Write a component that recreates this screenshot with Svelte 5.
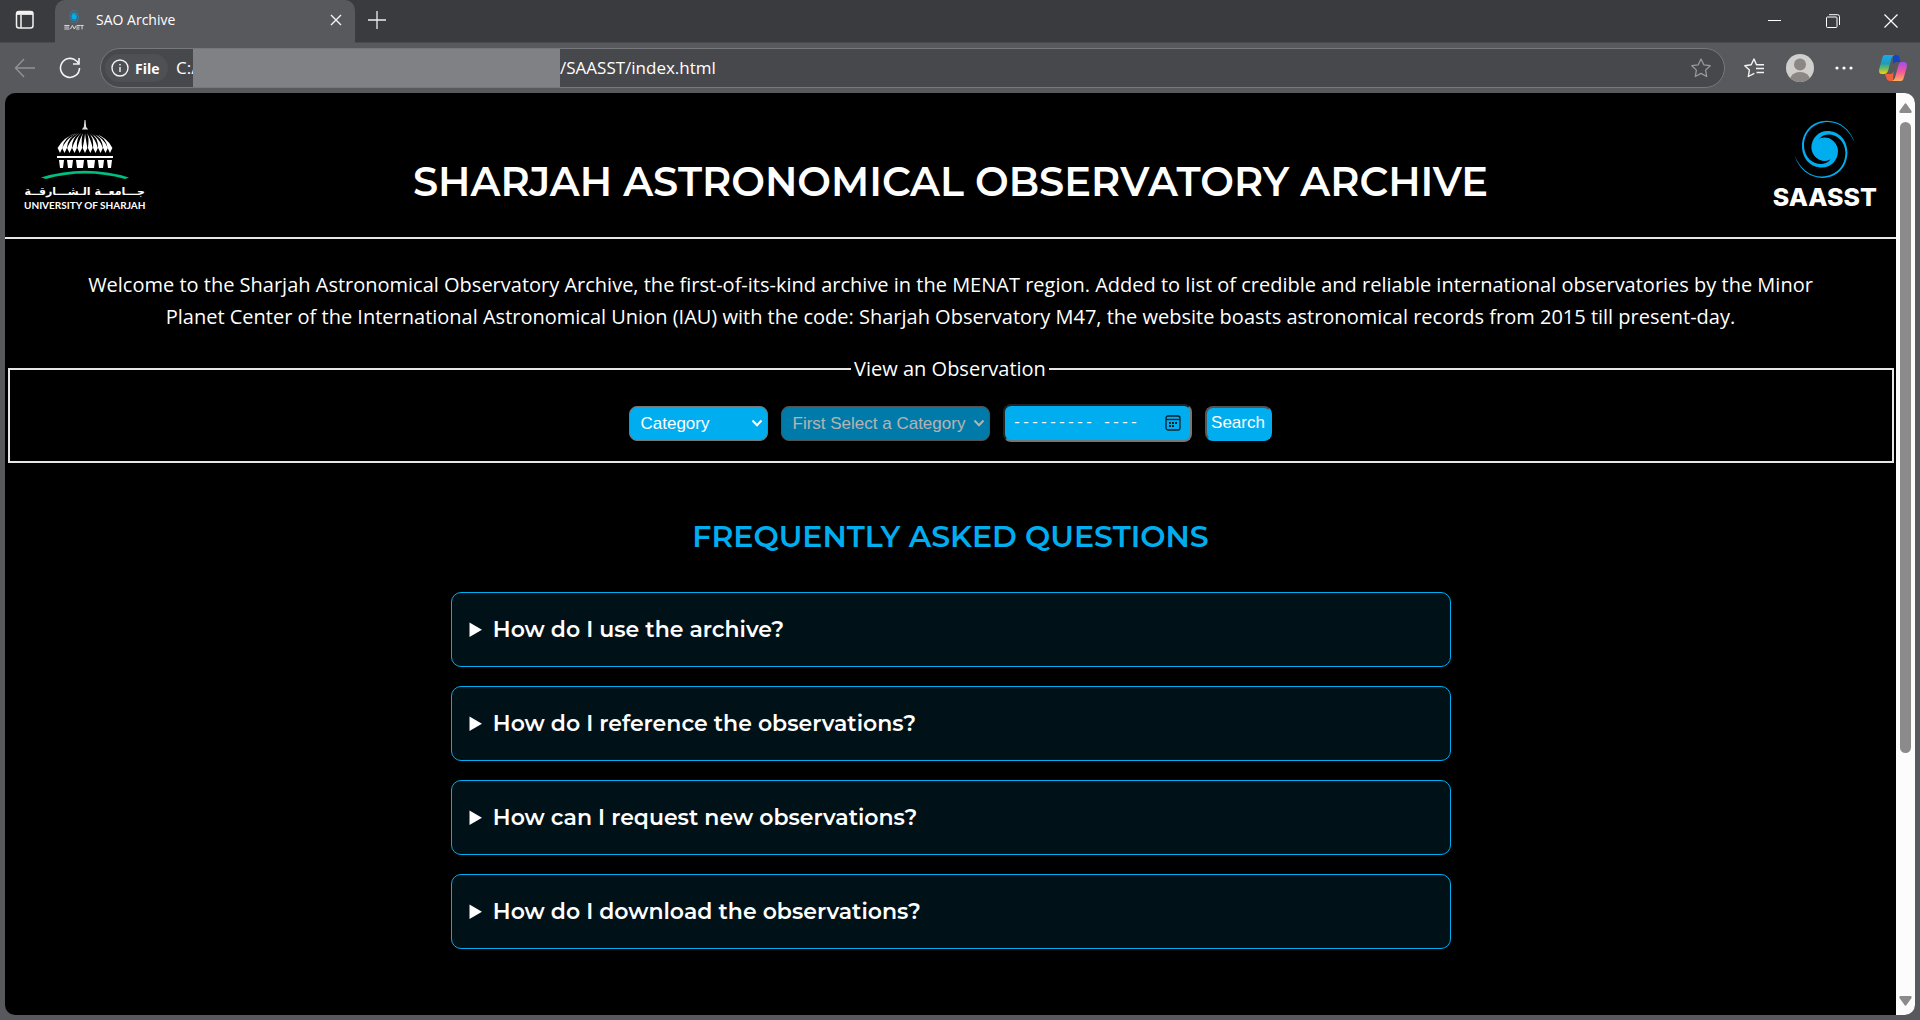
<script>
  const questions = [
    { q: 'How do I use the archive?', a: 'Choose a category, pick an object and a month, then press Search.' },
    { q: 'How do I reference the observations?', a: 'Cite the Sharjah Astronomical Observatory (M47) and the observation date.' },
    { q: 'How can I request new observations?', a: 'Contact the observatory team with your target and preferred dates.' },
    { q: 'How do I download the observations?', a: 'Open an observation and use its download link.' }
  ];
  const petals = [-25, -20.5, -15.5, -10.5, -5.3, 0, 5.3, 10.5, 15.5, 20.5, 25];
  const arm = 'M61 23C56 9 46 .7 32.700 .7C18 .7 8 12 8 26C8 39 17 47.500 28 47.500C37 47.500 44 40 44 31C44 24 38 18 31 18L38.700 35C37 40 33 44 27 44C18 44 10.500 37 10 26C10 13 19 2.500 33 2C46 1.700 55 10 61 23Z';
</script>

{#snippet galaxy()}
  <g fill="#00aeef">
    <circle cx="30.700" cy="29.300" r="11.700" />
    <path d={arm} />
    <path d={arm} transform="rotate(180 30.700 29.300)" />
  </g>
{/snippet}

<svelte:head><title>SAO Archive</title></svelte:head>

<div class="window">
  <div class="tabstrip">
    <button class="bare workspace" aria-label="Tab actions">
      <svg width="20" height="20" viewBox="0 0 20 20" fill="none" stroke="#f2f2f2" stroke-width="1.500">
        <rect x="1.500" y="1.500" width="16.500" height="16.500" rx="2.500" />
        <path d="M2 4h16M6 5v13" /><path d="M2 3h16" stroke-width="3" />
      </svg>
    </button>
    <div class="tab">
      <svg class="favicon" width="20" height="20" viewBox="0 0 62 62">
        <g transform="translate(13 0) scale(.6 .7)">{@render galaxy()}</g>
        <path d="M1 48h16M1 53h15M1 59h16M20 59l6-11 6 11 6-11M40 48h10M38 53h10M38 59h10M50 48h11M56 48v12" fill="none" stroke="#ddd" stroke-width="3" />
      </svg>
      <span class="tab-title">SAO Archive</span>
      <button class="bare tab-close" aria-label="Close tab">
        <svg width="12" height="12" viewBox="0 0 12 12" stroke="#f4f4f4" stroke-width="1.400"><path d="M1 1l10 10M11 1L1 11" /></svg>
      </button>
    </div>
    <button class="bare new-tab" aria-label="New tab">
      <svg width="18" height="18" viewBox="0 0 18 18" stroke="#eee" stroke-width="1.300"><path d="M9 0v18M0 9h18" /></svg>
    </button>
    <div class="controls">
      <button class="bare" aria-label="Minimise"><svg width="14" height="14" viewBox="0 0 14 14" stroke="#fff"><path d="M0 6.500h13" /></svg></button>
      <button class="bare" aria-label="Restore"><svg width="14" height="14" viewBox="0 0 14 14" fill="none" stroke="#fff"><rect x=".5" y="3" width="10.500" height="10.500" rx="1" /><path d="M3 .7h8.500a2 2 0 0 1 2 2V11" /></svg></button>
      <button class="bare" aria-label="Close window"><svg width="14" height="14" viewBox="0 0 14 14" stroke="#fff" stroke-width="1.200"><path d="M.5.5l13 13M13.500.5l-13 13" /></svg></button>
    </div>
  </div>

  <div class="toolbar">
    <button class="bare" aria-label="Back">
      <svg width="22" height="20" viewBox="0 0 22 20" fill="none" stroke="#919296" stroke-width="1.400"><path d="M21 10H1.500M10 1L1.500 10l8.500 9" /></svg>
    </button>
    <button class="bare" aria-label="Refresh">
      <svg width="22" height="22" viewBox="0 0 22 22" fill="none" stroke="#f4f4f4" stroke-width="1.600"><path d="M20.500 11a9.500 9.500 0 1 1-3-7l2.500 2.500M20 1v6h-6" /></svg>
    </button>
    <div class="address">
      <button class="site">
        <svg width="18" height="18" viewBox="0 0 18 18" fill="none" stroke="#f4f4f4" stroke-width="1.400"><circle cx="9" cy="9" r="8" /><path d="M9 8v5" /><path d="M9 5v1.500" /></svg>
        File
      </button>
      <span class="drive">C:/</span>
      <span class="hidden-path"></span>
      <span class="path">/SAASST/index.html</span>
      <button class="bare star" aria-label="Add to favourites">
        <svg width="20" height="20" viewBox="0 0 20 20" fill="none" stroke="#98999c" stroke-width="1.300" stroke-linejoin="round"><path d="M10 1l2.800 5.800 6.400.9-4.600 4.400 1.100 6.400L10 15.400l-5.700 3.100 1.100-6.400L.8 7.700l6.400-.9z" /></svg>
      </button>
    </div>
    <div class="actions">
      <button class="bare" aria-label="Favourites">
        <svg width="21" height="20" viewBox="0 0 21 20" fill="none" stroke="#f4f4f4" stroke-width="1.400" stroke-linejoin="round"><path d="M20 6.700h-7.500L10 1 7.200 6.800.8 7.700l4.600 4.400-1.100 6.400 6-3.200M12 10.500h8M12.500 14.500h7.500" /></svg>
      </button>
      <button class="bare" aria-label="Profile">
        <svg width="28" height="28" viewBox="0 0 28 28"><clipPath id="face"><circle cx="14" cy="14" r="14" /></clipPath><g clip-path="url(#face)"><path d="M0 0h28v28H0z" fill="#d1cfcd" /><circle cx="14" cy="10.500" r="6" fill="#8b8784" /><ellipse cx="14" cy="26" rx="10" ry="8" fill="#8b8784" /></g></svg>
      </button>
      <button class="bare" aria-label="Settings and more">
        <svg width="18" height="4" viewBox="0 0 18 4" fill="#fff"><circle cx="2" cy="2" r="1.600" /><circle cx="9" cy="2" r="1.600" /><circle cx="16" cy="2" r="1.600" /></svg>
      </button>
      <button class="bare copilot" aria-label="Copilot">
        <svg width="28" height="26" viewBox="0 0 28 26">
          <defs>
            <linearGradient id="cl" x1="0" y1="0" x2="0" y2="1"><stop offset="0" stop-color="#1aa8f0" /><stop offset=".45" stop-color="#1f9cb8" /><stop offset=".75" stop-color="#7cbf55" /><stop offset="1" stop-color="#ffd400" /></linearGradient>
            <linearGradient id="cr" x1="0" y1="0" x2="0" y2="1"><stop offset="0" stop-color="#a54cf0" /><stop offset=".5" stop-color="#f0589a" /><stop offset="1" stop-color="#ffac5c" /></linearGradient>
          </defs>
          <path d="M14 0h3c2 0 3 1 3.500 3l1 4h-4c-2 0-3 1-3.500 3z" fill="#1443c8" />
          <path d="M14 26h-3c-2 0-3-1-3.500-3l-1.500-4h5c2 0 3-1 3.500-3z" fill="#f0603c" />
          <path d="M6 0h9.500c-2.500 1-3 3-4 7L9 16c-.8 2-2 3-4 3H3c-3 0-3.500-3-2.500-6L3 4c.6-2.500 1.500-4 3-4z" fill="url(#cl)" />
          <path d="M22 26h-9c2.500-1 3-3 4-7l2.500-9c.6-2 1.600-3 3.500-3h2c3 0 3.500 3 2.500 6L25 22c-.6 2.500-1.500 4-3 4z" fill="url(#cr)" />
        </svg>
      </button>
    </div>
  </div>

  <div class="viewport">
    <main>
      <header>
        <div class="logo university">
          <svg width="88" height="60" viewBox="0 0 88 60">
            <path d="M43.500 0h1l.7 7 2 2.500h-6.400l2-2.500z" fill="#ddd" />
            <g fill="#fff">
              {#each petals as p}
                <path d="M{44 + p * 0.35} 13Q{44 + p * 0.85} 17 {44 + p - 2.4} 28L{44 + p} 33L{44 + p + 2.4} 28Q{44 + p * 0.9 + 0.6} 18 {44 + p * 0.35} 13Z" />
              {/each}
              <path d="M16 36h56v2H16zM18 40h5l-1 8h-3zM26 40h6l-1 8h-4zM35 40h8l-1 8h-6zM46 40h8l-1 8h-6zM57 40h6l-1 8h-4zM66 40h5l-1 8h-3z" />
            </g>
            <path d="M0 57.500Q44 44 88 57.500l-4 1.500Q44 48 5 59z" fill="#00bf83" />
          </svg>
          <span class="arabic" lang="ar" dir="rtl">جـــامعــة الـشـــارقــة</span>
          <span class="english">UNIVERSITY OF SHARJAH</span>
        </div>
        <h1>SHARJAH ASTRONOMICAL OBSERVATORY ARCHIVE</h1>
        <div class="logo saasst">
          <svg width="62" height="58" viewBox="0 0 62 58">{@render galaxy()}</svg>
          <span class="wordmark">SAASST</span>
        </div>
      </header>

      <p class="intro">Welcome to the Sharjah Astronomical Observatory Archive, the first-of-its-kind archive in the MENAT region. Added to list of credible and reliable international observatories by the Minor Planet Center of the International Astronomical Union (IAU) with the code: Sharjah Observatory M47, the website boasts astronomical records from 2015 till present-day.</p>

      <form onsubmit={(e) => e.preventDefault()}>
        <fieldset>
          <legend>View an Observation</legend>
          <div class="fields">
            <select class="category" aria-label="Category"><option>Category</option><option>Moon</option><option>Sun</option></select>
            <select class="object" aria-label="Object" disabled><option>First Select a Category</option></select>
            <div class="month">
              <input type="text" aria-label="Month and year" placeholder="--------- ----" />
              <button type="button" class="bare" aria-label="Open calendar">
                <svg width="16" height="16" viewBox="0 0 16 16" fill="none" stroke="#06202b" stroke-width="1.300">
                  <rect x="1" y="1" width="14" height="14" rx="2" /><path d="M1 4.500h14" />
                  <path d="M4 8h2M7 8h2M10 8h2M4 11h2M7 11h2" stroke-width="2" />
                </svg>
              </button>
            </div>
            <button class="search">Search</button>
          </div>
        </fieldset>
      </form>

      <section class="faq">
        <h2>FREQUENTLY ASKED QUESTIONS</h2>
        {#each questions as item}
          <details><summary>{item.q}</summary><p>{item.a}</p></details>
        {/each}
      </section>
    </main>
    <div class="scrollbar">
      <svg width="13" height="10" viewBox="0 0 13 10" fill="#8b8b8b"><path d="M5.500 1Q6.500-.5 7.500 1L12.500 8Q13 10 11.500 10H1.500Q0 10 .5 8Z" /></svg>
      <div class="track"><div class="thumb"></div></div>
      <svg width="13" height="10" viewBox="0 0 13 10" fill="#8b8b8b"><path d="M5.500 9Q6.500 10.500 7.500 9L12.500 2Q13 0 11.500 0H1.500Q0 0 .5 2Z" /></svg>
    </div>
  </div>
</div>

<style>
  :global(body) { margin: 0; background: #58595d; }
  * { box-sizing: border-box; }
  svg { display: block; flex: none; }
  .window { min-height: 100vh; display: flex; flex-direction: column; background: #58595d; color: #fff; font-family: "Segoe UI", "Open Sans", sans-serif; }
  .bare { border: 0; padding: 0; background: none; display: flex; align-items: center; justify-content: center; }

  .tabstrip { display: flex; height: 43px; background: #3a3b3e; border-bottom: 1px solid #4b4c50; }
  .workspace { width: 55px; padding-right: 5px; padding-bottom: 2px; }
  .tab { width: 300px; height: 43px; display: flex; align-items: center; gap: 12px; padding: 0 13px 4px 9px; background: #58595d; border-radius: 10px 10px 0 0; }
  .tab-title { flex: 1; font-size: 14px; }
  .new-tab { width: 44px; padding-bottom: 3px; }
  .controls { margin-left: auto; display: flex; }
  .controls .bare { width: 58px; }

  .toolbar { display: flex; align-items: center; height: 50px; padding: 0 13px 0 14px; gap: 23px; }
  .address { flex: 1; display: flex; align-items: center; height: 40px; padding: 0 13px 0 4px; margin-left: -4px; background: #47484c; border: 1px solid #77787b; border-radius: 20px; font-size: 17px; }
  .site { display: flex; align-items: center; gap: 6px; height: 28px; width: 63px; padding: 0 6px; border: 0; border-radius: 14px; background: #4f5054; color: #fff; font: 700 14px "Segoe UI", "Open Sans", sans-serif; }
  .drive { width: 17px; margin-left: 8px; white-space: nowrap; }
  .drive, .path { padding-bottom: 2px; }
  .hidden-path { width: 367px; height: 38px; background: #808184; }
  .star { margin-left: auto; }
  .actions { display: flex; align-items: center; gap: 21px; margin-left: -4px; }
  .copilot { margin-left: 5px; }

  .viewport { flex: 1; display: flex; margin: 0 5px 5px; border-radius: 10px; overflow: hidden; background: #000; }
  main { flex: 1; font-family: "Open Sans", sans-serif; }
  header { display: grid; grid-template-columns: 1fr auto 1fr; align-items: end; padding: 27px 19px 29px; border-bottom: 2px solid #e6e6e6; }
  h1, h2, summary { font-family: Montserrat, Inter, sans-serif; font-weight: 600; }
  h1 { margin: 0; font-size: 40px; line-height: 52px; }
  .logo { display: flex; flex-direction: column; align-items: center; white-space: nowrap; }
  .university { justify-self: start; margin-bottom: -2px; }
  .arabic { margin-top: 4px; font: 700 11px/16px "DejaVu Sans", sans-serif; }
  .english { font: 700 10px/10px Lato, sans-serif; }
  .saasst { justify-self: end; }
  .wordmark { margin-top: 8px; font: 800 25px/22px Inter, sans-serif; }
  .intro { margin: 30px 64px 20px; font-size: 20px; line-height: 32px; text-align: center; }
  fieldset { margin: 0 2px 0 3px; padding: 19px 14px 19px 12px; border: 2px solid #e6e6e6; }
  legend { margin: 0 auto; padding: 0 3px; font-size: 20px; line-height: 32px; }
  .fields { display: flex; align-items: center; justify-content: center; gap: 13px; }
  .fields select, .month, .search { height: 35px; border-radius: 8px; background-color: #00aeef; color: #fff; font: 17px Arial, "Liberation Sans", sans-serif; }
  .fields select { appearance: none; padding: 0 0 0 11px; border: 1px solid #767676; background-image: url("data:image/svg+xml,%3Csvg xmlns='http://www.w3.org/2000/svg' width='12' height='8'%3E%3Cpath d='M1.500 1.500L6 6.200L10.500 1.500' fill='none' stroke='white' stroke-width='2'/%3E%3C/svg%3E"); background-repeat: no-repeat; background-position: right 4px center; }
  .category { width: 139px; }
  .object { width: 209px; }
  .fields .object { opacity: .7; color: #fff; }
  .month { display: flex; align-items: center; width: 189px; height: 38px; padding: 0 9px 0 8px; border: 2px solid; border-color: #222 #767676 #767676 #222; }
  .month input { flex: 1; min-width: 0; padding: 0; border: 0; outline: 0; background: none; color: #fff; font: 15px "Liberation Mono", monospace; }
  .month input::placeholder { color: #fff; opacity: 1; }
  .search { width: 67px; padding: 0; border: 2px solid; border-color: #555 #00aeef #00aeef #555; }
  .faq { max-width: 1000px; margin: 54px auto 60px; }
  h2 { margin: 0 0 35px; font-size: 30px; line-height: 40px; text-align: center; color: #00aeef; }
  details { margin-bottom: 19px; padding: 22px 18px; border: 1px solid #00aeef; border-radius: 10px; background: #001117; }
  summary { font-size: 22px; line-height: 29px; }
  details p { margin: 12px 0 0; font-size: 18px; }

  .scrollbar { width: 19px; display: flex; flex-direction: column; align-items: center; padding: 10px 0 9px; background: #fcfcfc; }
  .track { flex: 1; width: 11px; padding: 9px 0; }
  .thumb { height: 73%; border-radius: 6px; background: #8b8b8b; }
</style>
